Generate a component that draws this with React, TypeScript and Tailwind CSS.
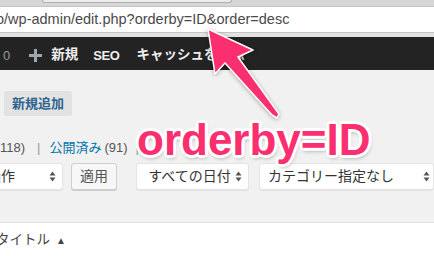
import React from "react";

const PINK = "#fb2f6f";

function SelectArrows() {
  return (
    <svg width="7" height="11" viewBox="0 0 7 11" className="shrink-0">
      <path d="M3.5 0.5 L6.5 4.5 L0.5 4.5 Z" fill="#555" />
      <path d="M3.5 10.5 L6.5 6.5 L0.5 6.5 Z" fill="#555" />
    </svg>
  );
}

function FakeSelect({ label, className }: { label: string; className: string }) {
  return (
    <div
      className={`h-[27px] bg-white border border-[#e4e4e4] rounded-[3px] shadow-[0_1px_1px_rgba(0,0,0,0.06)] flex items-center justify-between whitespace-nowrap text-[14px] text-[#333] ${className}`}
    >
      <span>{label}</span>
      <SelectArrows />
    </div>
  );
}

export default function App() {
  return (
    <div className="relative w-[434px] h-[256px] overflow-hidden bg-[#f1f1f1] font-['Liberation_Sans','Noto_Sans_CJK_JP',sans-serif]">
      {/* browser chrome */}
      <div className="h-[6px] bg-[#d6d6d6] flex">
        <div className="ml-[42px] w-[190px] h-[3px] bg-[#ececec] border border-t-0 border-[#b0b0b0] rounded-b-[3px]" />
      </div>
      <div className="h-[27px] bg-white border-y border-[#c4c4c4] flex items-center overflow-hidden">
        <span className="-ml-[4px] text-[14.5px] text-[#4a4a4a] whitespace-nowrap">
          o/wp-admin/edit.php?orderby=ID&amp;order=desc
        </span>
      </div>
      <div className="h-[4px] bg-[#e2e2e2]" />

      {/* admin bar */}
      <div className="h-[33px] bg-[#232323] flex items-center pt-[4px] whitespace-nowrap text-[13px] font-bold text-[#eee]">
        <span className="ml-[3px] font-normal text-[#999]">0</span>
        <svg width="13" height="13" viewBox="0 0 13 13" className="ml-[19px]">
          <rect x="5" y="0" width="3" height="13" fill="#a0a5aa" />
          <rect x="0" y="5" width="13" height="3" fill="#a0a5aa" />
        </svg>
        <span className="ml-[9px] text-[13.5px]">新規</span>
        <span className="ml-[15px] tracking-[-0.4px]">SEO</span>
        <span className="ml-[17px] text-[13.5px]">キャッシュを削除</span>
      </div>

      {/* page */}
      <div className="pt-[21px]">
        <div className="ml-[4px] h-[25px] w-[68px] flex items-center justify-center bg-[#e2e2e2] rounded-[2px] text-[13px] font-bold text-[#2e6390]">
          新規追加
        </div>

        <div className="mt-[23px] h-[18px] flex items-center whitespace-nowrap text-[13px] text-[#555]">
          <span>118)</span>
          <span className="ml-[12px] text-[#999]">|</span>
          <span className="ml-[9px] text-[#0073aa]">公開済み</span>
          <span className="ml-[3px]">(91)</span>
          <span className="ml-[8px] text-[#999]">|</span>
        </div>

        <div className="mt-[6px] flex items-center">
          <FakeSelect label="一括操作" className="-ml-[50px] w-[114px] pl-[8px] pr-[6px]" />
          <div className="ml-[8px] h-[27px] w-[47px] flex items-center justify-center bg-[#f7f7f7] border border-[#cfcfcf] rounded-[3px] shadow-[0_1px_0_#ccc] text-[14px] text-[#555]">
            適用
          </div>
          <FakeSelect label="すべての日付" className="ml-[19px] w-[114px] pl-[11px] pr-[6px]" />
          <FakeSelect label="カテゴリー指定なし" className="ml-[10px] w-[175px] shrink-0 pl-[8px] pr-[3px]" />
        </div>

        <div className="mt-[32px] h-[40px] bg-white border-t border-[#e1e1e1] flex items-center pb-[4px]">
          <span className="-ml-[4px] text-[13.5px] text-[#444]">タイトル</span>
          <span className="ml-[6px] text-[10px] text-[#444]">▲</span>
        </div>
      </div>

      {/* annotation overlay */}
      <svg
        width="434"
        height="256"
        viewBox="0 0 434 256"
        className="absolute left-0 top-0 pointer-events-none drop-shadow-[0_1px_2px_rgba(0,0,0,0.3)]"
      >
        <polygon
          points="208,29 253,50 238,57 279,114 277,118 272,115 225,63 215,74"
          fill={PINK}
          stroke="#fff"
          strokeWidth="1.5"
          strokeLinejoin="round"
        />
      </svg>
      <span
        className="absolute left-[137px] top-[118px] text-[44px] leading-[44px] font-bold whitespace-nowrap [text-shadow:3px_0_0_#fff,-3px_0_0_#fff,0_3px_0_#fff,0_-3px_0_#fff,2px_2px_0_#fff,-2px_2px_0_#fff,2px_-2px_0_#fff,-2px_-2px_0_#fff,1px_3px_4px_rgba(0,0,0,0.35)]"
        style={{ color: PINK }}
      >
        orderby=ID
      </span>
    </div>
  );
}
